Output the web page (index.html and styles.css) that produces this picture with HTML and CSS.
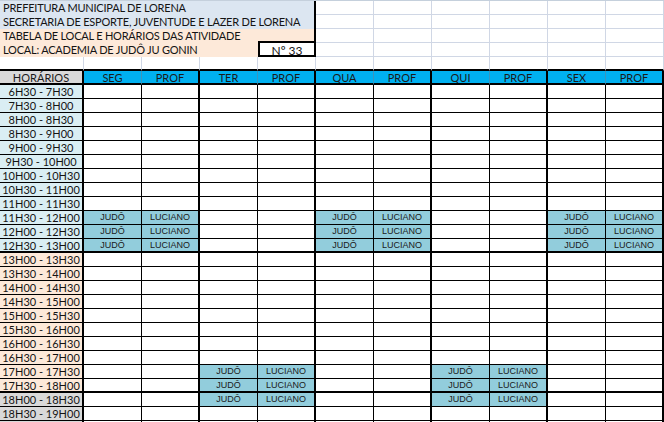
FILE: index.html
```html
<!DOCTYPE html>
<html lang="pt-BR">
<head>
<meta charset="utf-8">
<title>Tabela de horários</title>
<link rel="stylesheet" href="styles.css">
</head>
<body>
<div class="sheet">
  <div class="row"><div class="title blue">PREFEITURA MUNICIPAL DE LORENA</div><div></div><div></div><div></div><div></div><div></div><div></div></div>
  <div class="row"><div class="title blue">SECRETARIA DE ESPORTE, JUVENTUDE E LAZER DE LORENA</div><div></div><div></div><div></div><div></div><div></div><div></div></div>
  <div class="row"><div class="title peach">TABELA DE LOCAL E HORÁRIOS DAS ATIVIDADE</div><div></div><div></div><div></div><div></div><div></div><div></div></div>
  <div class="row"><div class="local peach">LOCAL: ACADEMIA DE JUDÔ JU GONIN</div><div class="num">Nº 33</div><div></div><div></div><div></div><div></div><div></div><div></div></div>
  <div class="row sep"><div></div><div></div><div></div><div></div><div></div><div></div><div></div><div></div><div></div><div></div><div></div></div>
  <div class="row head"><div class="hz">HORÁRIOS</div><div>SEG</div><div class="ge">PROF</div><div>TER</div><div class="ge">PROF</div><div>QUA</div><div class="ge">PROF</div><div>QUI</div><div class="ge">PROF</div><div>SEX</div><div class="ge">PROF</div></div>

  <div class="row data"><div class="tm tb">6H30 - 7H30</div><div></div><div class="ge"></div><div></div><div class="ge"></div><div></div><div class="ge"></div><div></div><div class="ge"></div><div></div><div class="ge"></div></div>
  <div class="row data"><div class="tm tb">7H30 - 8H00</div><div></div><div class="ge"></div><div></div><div class="ge"></div><div></div><div class="ge"></div><div></div><div class="ge"></div><div></div><div class="ge"></div></div>
  <div class="row data"><div class="tm tb">8H00 - 8H30</div><div></div><div class="ge"></div><div></div><div class="ge"></div><div></div><div class="ge"></div><div></div><div class="ge"></div><div></div><div class="ge"></div></div>
  <div class="row data"><div class="tm tb">8H30 - 9H00</div><div></div><div class="ge"></div><div></div><div class="ge"></div><div></div><div class="ge"></div><div></div><div class="ge"></div><div></div><div class="ge"></div></div>
  <div class="row data"><div class="tm tb">9H00 - 9H30</div><div></div><div class="ge"></div><div></div><div class="ge"></div><div></div><div class="ge"></div><div></div><div class="ge"></div><div></div><div class="ge"></div></div>
  <div class="row data"><div class="tm tb">9H30 - 10H00</div><div></div><div class="ge"></div><div></div><div class="ge"></div><div></div><div class="ge"></div><div></div><div class="ge"></div><div></div><div class="ge"></div></div>
  <div class="row data"><div class="tm tb">10H00 - 10H30</div><div></div><div class="ge"></div><div></div><div class="ge"></div><div></div><div class="ge"></div><div></div><div class="ge"></div><div></div><div class="ge"></div></div>
  <div class="row data"><div class="tm tb">10H30 - 11H00</div><div></div><div class="ge"></div><div></div><div class="ge"></div><div></div><div class="ge"></div><div></div><div class="ge"></div><div></div><div class="ge"></div></div>
  <div class="row data"><div class="tm tb">11H00 - 11H30</div><div></div><div class="ge"></div><div></div><div class="ge"></div><div></div><div class="ge"></div><div></div><div class="ge"></div><div></div><div class="ge"></div></div>
  <div class="row data"><div class="tm tb">11H30 - 12H00</div><div class="j">JUDÔ</div><div class="j ge">LUCIANO</div><div></div><div class="ge"></div><div class="j">JUDÔ</div><div class="j ge">LUCIANO</div><div></div><div class="ge"></div><div class="j">JUDÔ</div><div class="j ge">LUCIANO</div></div>
  <div class="row data"><div class="tm tb">12H00 - 12H30</div><div class="j">JUDÔ</div><div class="j ge">LUCIANO</div><div></div><div class="ge"></div><div class="j">JUDÔ</div><div class="j ge">LUCIANO</div><div></div><div class="ge"></div><div class="j">JUDÔ</div><div class="j ge">LUCIANO</div></div>
  <div class="row data tk"><div class="tm tb">12H30 - 13H00</div><div class="j">JUDÔ</div><div class="j ge">LUCIANO</div><div></div><div class="ge"></div><div class="j">JUDÔ</div><div class="j ge">LUCIANO</div><div></div><div class="ge"></div><div class="j">JUDÔ</div><div class="j ge">LUCIANO</div></div>
  <div class="row data"><div class="tm tp">13H00 - 13H30</div><div></div><div class="ge"></div><div></div><div class="ge"></div><div></div><div class="ge"></div><div></div><div class="ge"></div><div></div><div class="ge"></div></div>
  <div class="row data"><div class="tm tp">13H30 - 14H00</div><div></div><div class="ge"></div><div></div><div class="ge"></div><div></div><div class="ge"></div><div></div><div class="ge"></div><div></div><div class="ge"></div></div>
  <div class="row data"><div class="tm tp">14H00 - 14H30</div><div></div><div class="ge"></div><div></div><div class="ge"></div><div></div><div class="ge"></div><div></div><div class="ge"></div><div></div><div class="ge"></div></div>
  <div class="row data"><div class="tm tp">14H30 - 15H00</div><div></div><div class="ge"></div><div></div><div class="ge"></div><div></div><div class="ge"></div><div></div><div class="ge"></div><div></div><div class="ge"></div></div>
  <div class="row data"><div class="tm tp">15H00 - 15H30</div><div></div><div class="ge"></div><div></div><div class="ge"></div><div></div><div class="ge"></div><div></div><div class="ge"></div><div></div><div class="ge"></div></div>
  <div class="row data"><div class="tm tp">15H30 - 16H00</div><div></div><div class="ge"></div><div></div><div class="ge"></div><div></div><div class="ge"></div><div></div><div class="ge"></div><div></div><div class="ge"></div></div>
  <div class="row data"><div class="tm tp">16H00 - 16H30</div><div></div><div class="ge"></div><div></div><div class="ge"></div><div></div><div class="ge"></div><div></div><div class="ge"></div><div></div><div class="ge"></div></div>
  <div class="row data"><div class="tm tp">16H30 - 17H00</div><div></div><div class="ge"></div><div></div><div class="ge"></div><div></div><div class="ge"></div><div></div><div class="ge"></div><div></div><div class="ge"></div></div>
  <div class="row data"><div class="tm tp">17H00 - 17H30</div><div></div><div class="ge"></div><div class="j">JUDÔ</div><div class="j ge">LUCIANO</div><div></div><div class="ge"></div><div class="j">JUDÔ</div><div class="j ge">LUCIANO</div><div></div><div class="ge"></div></div>
  <div class="row data tk"><div class="tm tp">17H30 - 18H00</div><div></div><div class="ge"></div><div class="j">JUDÔ</div><div class="j ge">LUCIANO</div><div></div><div class="ge"></div><div class="j">JUDÔ</div><div class="j ge">LUCIANO</div><div></div><div class="ge"></div></div>
  <div class="row data"><div class="tm tg">18H00 - 18H30</div><div></div><div class="ge"></div><div class="j">JUDÔ</div><div class="j ge">LUCIANO</div><div></div><div class="ge"></div><div class="j">JUDÔ</div><div class="j ge">LUCIANO</div><div></div><div class="ge"></div></div>
  <div class="row data"><div class="tm tg">18H30 - 19H00</div><div></div><div class="ge"></div><div></div><div class="ge"></div><div></div><div class="ge"></div><div></div><div class="ge"></div><div></div><div class="ge"></div></div>
  <div class="row data"><div class="tm tg"></div><div></div><div class="ge"></div><div></div><div class="ge"></div><div></div><div class="ge"></div><div></div><div class="ge"></div><div></div><div class="ge"></div></div>
</div>
</body>
</html>
```

FILE: styles.css
```css
* {
  box-sizing: border-box;
}

html, body {
  margin: 0;
  padding: 0;
  background: #ffffff;
  overflow: hidden;
}

body {
  font-family: Lato, "Liberation Sans", sans-serif;
  font-size: 11px;
  color: #141414;
}

.sheet {
  display: flex;
  flex-direction: column;
  width: 664px;
  border-top: 1px solid #c5d0dc;
}

.row {
  display: grid;
  grid-template-columns: 84px repeat(10, 58px);
  height: 14px;
  flex: none;
}

.row > div {
  border-right: 1px solid #d0d7e5;
  border-bottom: 1px solid #d0d7e5;
  line-height: 13px;
  white-space: nowrap;
  overflow: hidden;
  text-align: center;
}

/* title block */
.row > .title {
  grid-column: span 5;
  text-align: left;
  padding-left: 3px;
  letter-spacing: -0.22px;
  border-right: 2px solid #000;
  border-bottom: none;
}

.row > .local {
  grid-column: span 4;
  text-align: left;
  padding-left: 3px;
  letter-spacing: -0.22px;
  border-right: none;
  border-bottom: none;
}

.blue {
  background: #dce6f1;
}

.peach {
  background: #fde9d9;
}

.row > .num {
  background: #ffffff;
  border: 2px solid #000;
  margin-top: -2px;
  height: 16px;
  line-height: 14px;
  padding-top: 1px;
  font-size: 12px;
}

.row.sep > div {
  border-bottom: 2px solid #000;
}

/* header row */
.row.head > div {
  background: #00b0f0;
  border-right: 1px solid #3d95bd;
  border-bottom: 2px solid #000;
  line-height: 13px;
  color: #1a1a1a;
}

.row.head > .hz {
  background: #d9d9d9;
  border-right: 2px solid #000;
}

.row.head > .ge {
  border-right: 2px solid #000;
}

/* data rows */
.row.data > div {
  border-right: 1px solid #000;
  border-bottom: 1px solid #000;
}

.row.data > .ge {
  border-right-width: 2px;
}

.row.data > .tm {
  border-right-width: 2px;
}

.row.data.tk > div {
  border-bottom-width: 2px;
}

.tb {
  background: #daeef3;
}

.tp {
  background: #fde9d9;
}

.tg {
  background: #d9d9d9;
}

.row.data > .j {
  background: #92cddc;
  font-family: "Liberation Sans", Arial, sans-serif;
  font-size: 9px;
  line-height: 12px;
  color: #1a1a1a;
}
```
